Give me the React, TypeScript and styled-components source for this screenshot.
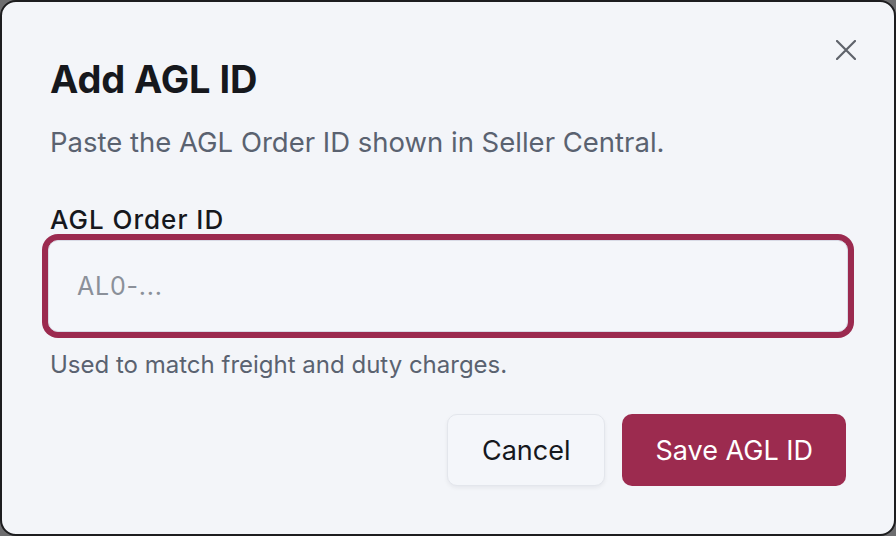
import React from 'react'
import styled, { createGlobalStyle, css } from 'styled-components'

const GlobalStyle = createGlobalStyle`
  html, body {
    margin: 0;
    padding: 0;
    height: 100%;
    background: #6d6d6f;
  }
  #root {
    height: 100%;
  }
  * {
    box-sizing: border-box;
  }
`

const textInset = css`
  padding-left: 2px;
`

const Dialog = styled.div`
  position: relative;
  height: 100vh;
  width: 100vw;
  background: #f3f5f9;
  border: 2px solid #1d1d1f;
  border-radius: 16px;
  padding: 54px 46px 0;
  font-family: Inter, 'Noto Sans', sans-serif;
  display: flex;
  flex-direction: column;
`

const CloseButton = styled.button`
  position: absolute;
  top: 31px;
  right: 31px;
  width: 34px;
  height: 34px;
  border: none;
  background: transparent;
  padding: 0;
  display: flex;
  align-items: center;
  justify-content: center;
  cursor: pointer;
  color: #5f636b;
`

const Title = styled.h2`
  ${textInset};
  margin: 0;
  font-size: 38px;
  line-height: 46px;
  font-weight: 700;
  color: #16181d;
  letter-spacing: -0.1px;
`

const Subtitle = styled.p`
  ${textInset};
  margin: 23px 0 0;
  font-size: 27.5px;
  line-height: 34px;
  color: #5a6270;
`

const Label = styled.label`
  ${textInset};
  margin-top: 46px;
  font-size: 26px;
  line-height: 30px;
  font-weight: 500;
  letter-spacing: 1px;
  color: #16181d;
`

const Input = styled.input`
  margin-top: 5px;
  width: 100%;
  height: 92px;
  border: 1px solid #d9dbe6;
  border-radius: 10px;
  background: #f4f6fa;
  box-shadow: 0 0 0 6px #9b2a4f;
  padding: 0 28px;
  font-family: Inter, 'Noto Sans', sans-serif;
  font-size: 25px;
  letter-spacing: 0.8px;
  color: #16181d;
  outline: none;
  caret-color: #16181d;

  &::placeholder {
    color: #8b9099;
  }
`

const Helper = styled.p`
  ${textInset};
  margin: 19px 0 0;
  font-size: 24px;
  line-height: 28px;
  color: #5a6270;
`

const Actions = styled.div`
  margin-top: 35px;
  display: flex;
  justify-content: flex-end;
  gap: 17px;
  padding-right: 2px;
`

const Button = styled.button<{ $primary?: boolean }>`
  height: 72px;
  padding: 0 ${(p) => (p.$primary ? '33px' : '34px')};
  border-radius: 10px;
  font-family: Inter, 'Noto Sans', sans-serif;
  font-size: 27px;
  font-weight: 400;
  cursor: pointer;
  border: ${(p) => (p.$primary ? 'none' : '1px solid #e3e6ec')};
  background: ${(p) => (p.$primary ? '#9c2b4f' : '#f4f6fa')};
  color: ${(p) => (p.$primary ? '#ffffff' : '#16181d')};
  box-shadow: ${(p) => (p.$primary ? 'none' : '0 2px 4px rgba(20, 24, 40, 0.06)')};
`

const App: React.FC = () => {
  return (
    <>
      <GlobalStyle />
      <Dialog>
        <CloseButton aria-label="Close">
          <svg width="20" height="20" viewBox="0 0 20 20" fill="none">
            <path d="M1 1L19 19M19 1L1 19" stroke="currentColor" strokeWidth="2.2" strokeLinecap="round" />
          </svg>
        </CloseButton>
        <Title>Add AGL ID</Title>
        <Subtitle>Paste the AGL Order ID shown in Seller Central.</Subtitle>
        <Label htmlFor="agl">AGL Order ID</Label>
        <Input id="agl" placeholder="AL0-..." autoFocus />
        <Helper>Used to match freight and duty charges.</Helper>
        <Actions>
          <Button>Cancel</Button>
          <Button $primary>Save AGL ID</Button>
        </Actions>
      </Dialog>
    </>
  )
}

export default App
